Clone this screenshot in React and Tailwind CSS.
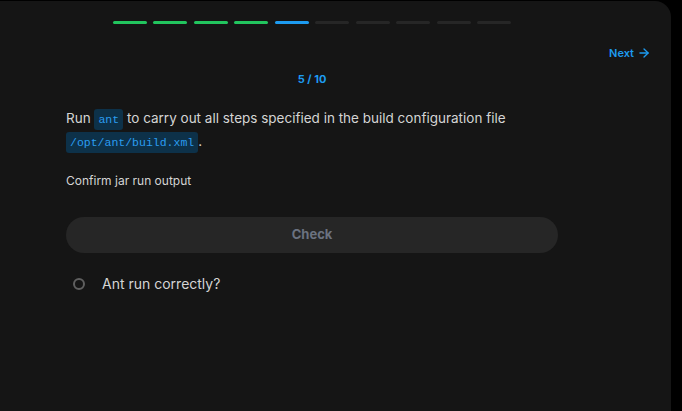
import React from 'react';
import { ArrowRight } from 'lucide-react';

const steps = ['done', 'done', 'done', 'done', 'current', 'todo', 'todo', 'todo', 'todo', 'todo'];

const Code = ({ children }) => (
  <code className="rounded-[3px] bg-[#0d3149] px-[4px] py-[4px] font-['Liberation_Mono',monospace] text-[11.5px] leading-none text-[#2b9cf0]">
    {children}
  </code>
);

export default function App() {
  return (
    <div className="h-[411px] w-[682px] overflow-hidden bg-black font-['Inter',sans-serif]">
      <div className="mt-px h-[410px] w-[671px] rounded-tr-[16px] bg-[#151515]">
        {/* progress */}
        <div className="flex w-[558px] justify-center gap-[6.5px] pl-[66px] pt-[20px]">
          {steps.map((s, i) => (
            <div
              key={i}
              className={`h-[3px] w-[34px] rounded-full ${
                s === 'done' ? 'bg-[#22c55e]' : s === 'current' ? 'bg-[#1d9bf0]' : 'bg-[#262626]'
              }`}
            />
          ))}
        </div>

        <div className="mt-[21px] flex justify-end pr-[20px]">
          <button className="flex items-center gap-[3px] text-[11px] font-semibold leading-[16px] text-[#1d9bf0]">
            Next
            <ArrowRight className="h-[14px] w-[14px]" strokeWidth={2.25} />
          </button>
        </div>

        <div className="w-[558px] pl-[66px]">
          <div className="mt-[10px] text-center text-[11px] font-bold leading-[16px] text-[#1d9bf0]">5 / 10</div>

          <p className="mt-[20px] text-[13.5px] leading-[23px] text-[#d4d4d4]">
            Run <Code>ant</Code> to carry out all steps specified in the build configuration file{' '}
            <Code>/opt/ant/build.xml</Code>.
          </p>

          <div className="mt-[20px] text-[12px] leading-[16px] text-[#d4d4d4]">Confirm jar run output</div>

          <button className="mt-[28px] flex h-[36px] w-full items-center justify-center rounded-full bg-[#262626] text-[13px] font-bold text-[#6b7280]">
            Check
          </button>

          <div className="mt-[21px] flex items-center">
            <div className="ml-[7px] h-[12px] w-[12px] rounded-full border-2 border-[#5f5f5f]" />
            <span className="ml-[17px] text-[14px] leading-[20px] text-[#d4d4d4]">Ant run correctly?</span>
          </div>
        </div>
      </div>
    </div>
  );
}
